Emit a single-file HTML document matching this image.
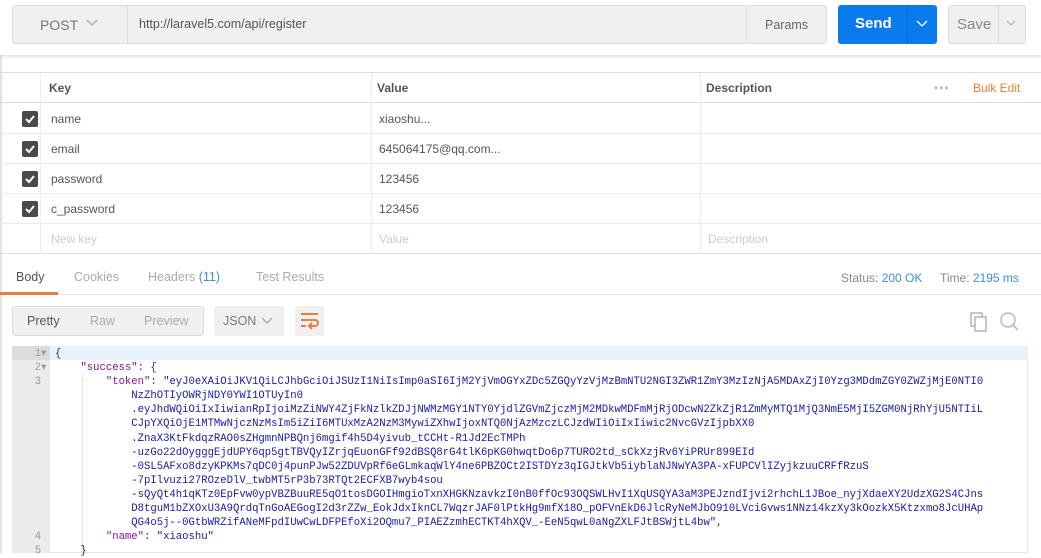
<!DOCTYPE html>
<html><head><meta charset="utf-8"><style>
*{box-sizing:border-box;margin:0;padding:0}
body{width:1041px;height:553px;overflow:hidden;background:#fff;font-family:"Liberation Sans",sans-serif;font-size:12px;color:#505050;position:relative}
.a{position:absolute}
.top{left:0;top:0;width:1041px;height:55px;background:#fff;box-shadow:0 2px 3px rgba(0,0,0,.12)}
.box{background:#f0f0f0;border:1px solid #ddd;border-radius:3px}
.row{left:0;width:1041px;height:30px;border-bottom:1px solid #ebebeb}
.cb{left:22px;width:16px;height:16px;background:#4a4a4a;border-radius:2px}
.cb svg{position:absolute;left:0;top:0}
.cell{top:0;line-height:30px;font-size:12px;color:#555}
pre{font-family:"Liberation Mono",monospace;font-size:10.6px;line-height:14.1px;color:#333}
.s{color:#881391}.str{color:#1a1aa6}
</style></head><body>
<div class="a" style="left:0;top:0;width:2px;height:553px;background:#e2e2e2"></div>
<div class="a top"></div>
<div class="a box" style="left:12px;top:5px;width:735px;height:39px"></div>
<div class="a" style="left:127px;top:5px;width:1px;height:39px;background:#ddd"></div>
<div class="a" style="left:40px;top:17px;font-size:14px;color:#777">POST</div>
<svg class="a" style="left:86px;top:19px" width="12" height="8"><path d="M1 1l5 5 5-5" stroke="#aaa" fill="none" stroke-width="1.3"/></svg>
<div class="a" style="left:139px;top:17px;font-size:12.5px;color:#555">http://laravel5.com/api/register</div>
<div class="a box" style="left:746px;top:5px;width:81px;height:39px;border-left:1px solid #ddd"></div>
<div class="a" style="left:765px;top:18px;font-size:12.5px;color:#666">Params</div>
<div class="a" style="left:838px;top:5px;width:99px;height:39px;background:#097bed;border-radius:3px"></div>
<div class="a" style="left:907px;top:5px;width:1px;height:39px;background:#0a66c6"></div>
<div class="a" style="left:855px;top:15px;font-size:15px;font-weight:bold;color:#fff">Send</div>
<svg class="a" style="left:916px;top:20px" width="12" height="8"><path d="M1 1l5 5 5-5" stroke="#fff" fill="none" stroke-width="1.3"/></svg>
<div class="a box" style="left:948px;top:5px;width:78px;height:39px"></div>
<div class="a" style="left:998px;top:5px;width:1px;height:39px;background:#ddd"></div>
<div class="a" style="left:957px;top:16px;font-size:15px;color:#888">Save</div>
<svg class="a" style="left:1006px;top:20px" width="10" height="7"><path d="M1 1l4 4 4-4" stroke="#aaa" fill="none" stroke-width="1.1"/></svg>

<div class="a" style="left:0;top:72px;width:1041px;height:1px;background:#ddd"></div>
<div class="a row" style="top:73px;border-bottom:1px solid #ddd">
 <div class="a cell" style="left:49px;font-weight:bold;color:#555">Key</div>
 <div class="a cell" style="left:377px;font-weight:bold;color:#555">Value</div>
 <div class="a cell" style="left:706px;font-weight:bold;color:#555">Description</div>
 <div class="a cell" style="left:934px;color:#bbb;letter-spacing:1px">•••</div>
 <div class="a cell" style="left:973px;color:#e5813a">Bulk Edit</div>
</div>
<div class="a row" style="top:104px"><div class="a cb" style="top:7px"><svg width="16" height="16"><path d="M4 8l3 3 5-6" stroke="#fff" stroke-width="2" fill="none"/></svg></div><div class="a cell" style="left:51px">name</div><div class="a cell" style="left:379px">xiaoshu...</div></div>
<div class="a row" style="top:134px"><div class="a cb" style="top:7px"><svg width="16" height="16"><path d="M4 8l3 3 5-6" stroke="#fff" stroke-width="2" fill="none"/></svg></div><div class="a cell" style="left:51px">email</div><div class="a cell" style="left:379px">645064175@qq.com...</div></div>
<div class="a row" style="top:164px"><div class="a cb" style="top:7px"><svg width="16" height="16"><path d="M4 8l3 3 5-6" stroke="#fff" stroke-width="2" fill="none"/></svg></div><div class="a cell" style="left:51px">password</div><div class="a cell" style="left:379px">123456</div></div>
<div class="a row" style="top:194px"><div class="a cb" style="top:7px"><svg width="16" height="16"><path d="M4 8l3 3 5-6" stroke="#fff" stroke-width="2" fill="none"/></svg></div><div class="a cell" style="left:51px">c_password</div><div class="a cell" style="left:379px">123456</div></div>
<div class="a row" style="top:224px;border-bottom:1px solid #ddd"><div class="a cell" style="left:51px;color:#ccc">New key</div><div class="a cell" style="left:379px;color:#ccc">Value</div><div class="a cell" style="left:708px;color:#ccc">Description</div></div>
<div class="a" style="left:40px;top:73px;width:1px;height:181px;background:#eee"></div>
<div class="a" style="left:371px;top:73px;width:1px;height:181px;background:#eee"></div>
<div class="a" style="left:700px;top:73px;width:1px;height:181px;background:#eee"></div>

<div class="a" style="left:16px;top:270px;font-size:12.5px;color:#555">Body</div>
<div class="a" style="left:74px;top:270px;font-size:12.5px;color:#aaa">Cookies</div>
<div class="a" style="left:148px;top:270px;font-size:12.5px;color:#aaa">Headers <span style="color:#3d8ed6">(11)</span></div>
<div class="a" style="left:256px;top:270px;font-size:12.5px;color:#aaa">Test Results</div>
<div class="a" style="left:841px;top:271px;font-size:12px;color:#888">Status: <span style="color:#3d8ed6">200 OK</span></div>
<div class="a" style="left:940px;top:271px;font-size:12px;color:#888">Time: <span style="color:#3d8ed6">2195 ms</span></div>
<div class="a" style="left:0;top:294px;width:1041px;height:1px;background:#e4e4e4"></div>
<div class="a" style="left:0;top:292px;width:58px;height:3px;background:#e5813a"></div>

<div class="a box" style="left:12px;top:306px;width:192px;height:30px"></div>
<div class="a" style="left:27px;top:314px;font-size:12.5px;color:#555">Pretty</div>
<div class="a" style="left:90px;top:314px;font-size:12.5px;color:#aaa">Raw</div>
<div class="a" style="left:144px;top:314px;font-size:12.5px;color:#aaa">Preview</div>
<div class="a box" style="left:214px;top:306px;width:70px;height:30px;border:none"></div>
<div class="a" style="left:223px;top:314px;font-size:12.5px;color:#777">JSON</div>
<svg class="a" style="left:261px;top:317px" width="12" height="8"><path d="M1 1l5 5 5-5" stroke="#aaa" fill="none" stroke-width="1.3"/></svg>
<div class="a box" style="left:295px;top:306px;width:29px;height:30px;border:none"></div>
<svg class="a" style="left:300px;top:312px" width="20" height="18"><g stroke="#e5813a" stroke-width="2" fill="none"><path d="M1 2h17M1 8h14a3 3 0 0 1 0 6h-5M12 11l-3 3 3 3M1 14h5"/></g></svg>
<svg class="a" style="left:970px;top:311px" width="50" height="22"><g fill="none" stroke="#bbb" stroke-width="1.6"><rect x="1" y="2" width="11" height="13"/><rect x="5" y="6" width="11" height="14" fill="#fff"/><circle cx="38" cy="9" r="7"/><path d="M43 14l5 5"/></g></svg>

<div class="a" style="left:12px;top:346px;width:1016px;height:207px;border:1px solid #e6e6e6;background:#fff"></div>
<div class="a" style="left:12px;top:346px;width:38px;height:207px;background:#ebebeb"></div>
<div class="a" style="left:12px;top:346px;width:1016px;height:14px;background:#e8f2fc"></div>
<div class="a" style="left:12px;top:346px;width:38px;height:14px;background:#dcdcdc"></div>
<pre class="a" style="left:22px;top:347px;color:#999">  1▾
  2▾
  3










  4
  5</pre>
<div class="a" style="left:82px;top:374px;width:1px;height:179px;border-left:1px dotted #ccc"></div>
<pre class="a" style="left:55px;top:347px">{
    <span class="s">"success"</span>: {
        <span class="s">"token"</span>: <span class="str">"eyJ0eXAiOiJKV1QiLCJhbGciOiJSUzI1NiIsImp0aSI6IjM2YjVmOGYxZDc5ZGQyYzVjMzBmNTU2NGI3ZWR1ZmY3MzIzNjA5MDAxZjI0Yzg3MDdmZGY0ZWZjMjE0NTI0
            NzZhOTIyOWRjNDY0YWI1OTUyIn0
            .eyJhdWQiOiIxIiwianRpIjoiMzZiNWY4ZjFkNzlkZDJjNWMzMGY1NTY0YjdlZGVmZjczMjM2MDkwMDFmMjRjODcwN2ZkZjR1ZmMyMTQ1MjQ3NmE5MjI5ZGM0NjRhYjU5NTIiL
            CJpYXQiOjE1MTMwNjczNzMsIm5iZiI6MTUxMzA2NzM3MywiZXhwIjoxNTQ0NjAzMzczLCJzdWIiOiIxIiwic2NvcGVzIjpbXX0
            .ZnaX3KtFkdqzRAO0sZHgmnNPBQnj6mgif4h5D4yivub_tCCHt-R1Jd2EcTMPh
            -uzGo22dOygggEjdUPY6qp5gtTBVQyIZrjqEuonGFf92dBSQ8rG4tlK6pKG0hwqtDo6p7TURO2td_sCkXzjRv6YiPRUr899EId
            -0SL5AFxo8dzyKPKMs7qDC0j4punPJw52ZDUVpRf6eGLmkaqWlY4ne6PBZOCt2ISTDYz3qIGJtkVb5iyblaNJNwYA3PA-xFUPCVlIZyjkzuuCRFfRzuS
            -7pIlvuzi27ROzeDlV_twbMT5rP3b73RTQt2ECFXB7wyb4sou
            -sQyQt4h1qKTz0EpFvw0ypVBZBuuRE5qO1tosDGOIHmgioTxnXHGKNzavkzI0nB0ffOc93OQSWLHvI1XqUSQYA3aM3PEJzndIjvi2rhchL1JBoe_nyjXdaeXY2UdzXG2S4CJns
            D8tguM1bZXOxU3A9QrdqTnGoAEGogI2d3rZZw_EokJdxIknCL7WqzrJAF0lPtkHg9mfX18O_pOFVnEkD6JlcRyNeMJbO910LVciGvws1NNz14kzXy3kOozkX5Ktzxmo8JcUHAp
            QG4o5j--0GtbWRZifANeMFpdIUwCwLDFPEfoXi2OQmu7_PIAEZzmhECTKT4hXQV_-EeN5qwL0aNgZXLFJtBSWjtL4bw"</span>,
        <span class="s">"name"</span>: <span class="str">"xiaoshu"</span>
    }</pre>
</body></html>
